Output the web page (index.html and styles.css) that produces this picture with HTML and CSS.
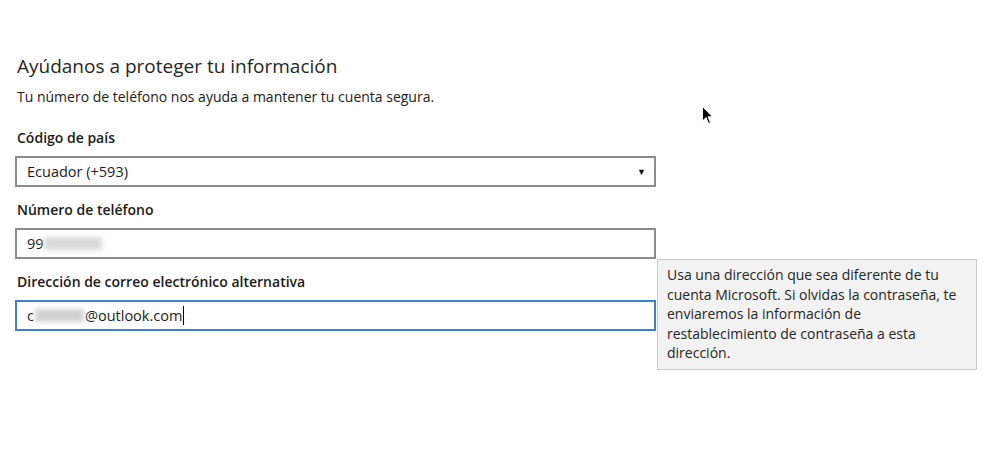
FILE: index.html
```html
<!DOCTYPE html>
<html lang="es">
<head>
<meta charset="utf-8">
<link rel="stylesheet" href="styles.css">
</head>
<body>
<main class="page">
  <h1 class="title">Ayúdanos a proteger tu información</h1>
  <p class="subtitle">Tu número de teléfono nos ayuda a mantener tu cuenta segura.</p>

  <div class="field">
    <label class="label">Código de país</label>
    <div class="box select">
      <span>Ecuador (+593)</span>
      <span class="caret">&#9660;</span>
    </div>
  </div>

  <div class="field">
    <label class="label">Número de teléfono</label>
    <div class="box">
      <span>99</span><span class="blur phone-blur"></span>
    </div>
  </div>

  <div class="field email-field">
    <label class="label">Dirección de correo electrónico alternativa</label>
    <div class="box focused">
      <span>c</span><span class="blur email-blur"></span><span>@outlook.com</span><span class="text-cursor"></span>
    </div>
    <div class="tooltip">Usa una dirección que sea diferente de tu<br>cuenta Microsoft. Si olvidas la contraseña, te<br>enviaremos la información de<br>restablecimiento de contraseña a esta<br>dirección.</div>
  </div>

  <svg class="pointer" width="12" height="20" viewBox="0 0 12 20" aria-hidden="true">
    <path d="M0.5 0.5 L0.5 15 L4 11.5 L6.5 17.5 L8.5 16.5 L6 10.8 L10.5 10.8 Z" fill="#000" stroke="#fff" stroke-width="1"/>
  </svg>
</main>
</body>
</html>
```

FILE: styles.css
```css
html, body {
  margin: 0;
  padding: 0;
  background: #ffffff;
}

body {
  font-family: "Open Sans", "Noto Sans", "Liberation Sans", sans-serif;
  color: #1f1f1f;
}

.page {
  position: relative;
  width: 990px;
  height: 463px;
  padding: 53px 0 0 15px;
  box-sizing: border-box;
}

.title {
  margin: 0 0 0 2px;
  font-size: 19px;
  font-weight: 400;
  line-height: 26px;
  color: #262626;
}

.subtitle {
  margin: 8px 0 0 2px;
  font-size: 14px;
  line-height: 20px;
  color: #1a1a1a;
}

.field {
  width: 641px;
  margin-top: 20px;
}

.field + .field {
  margin-top: 12px;
}

.label {
  display: block;
  margin: 0 0 7px 2px;
  font-size: 14px;
  font-weight: 600;
  line-height: 22px;
  color: #1a1a1a;
}

.box {
  display: flex;
  align-items: center;
  height: 31px;
  box-sizing: border-box;
  border: 2px solid #8c8c8c;
  padding: 0 8px 0 10px;
  font-size: 14.5px;
  color: #1a1a1a;
  background: #fff;
}

.select {
  justify-content: space-between;
  padding-right: 8px;
}

.caret {
  font-size: 9px;
  color: #111;
}

.focused {
  border-color: #3a80d2;
}

.blur {
  display: inline-block;
  height: 13px;
  background: #d2d2d2;
  filter: blur(2.5px);
}

.phone-blur {
  width: 58px;
  margin-left: 0;
  background: #dadada;
}

.email-blur {
  width: 49px;
  margin: 0 1px 0 1px;
}

.text-cursor {
  display: inline-block;
  width: 1px;
  height: 19px;
  background: #000;
  margin-left: 1px;
}

.email-field {
  position: relative;
}

.tooltip {
  position: absolute;
  left: 642px;
  top: -12px;
  width: 320px;
  box-sizing: border-box;
  padding: 5px 6px 6px 9px;
  background: #f2f2f2;
  border: 1px solid #cccccc;
  font-size: 14px;
  line-height: 19.5px;
  color: #262626;
  white-space: nowrap;
}

.pointer {
  position: absolute;
  left: 702px;
  top: 106px;
}
```
